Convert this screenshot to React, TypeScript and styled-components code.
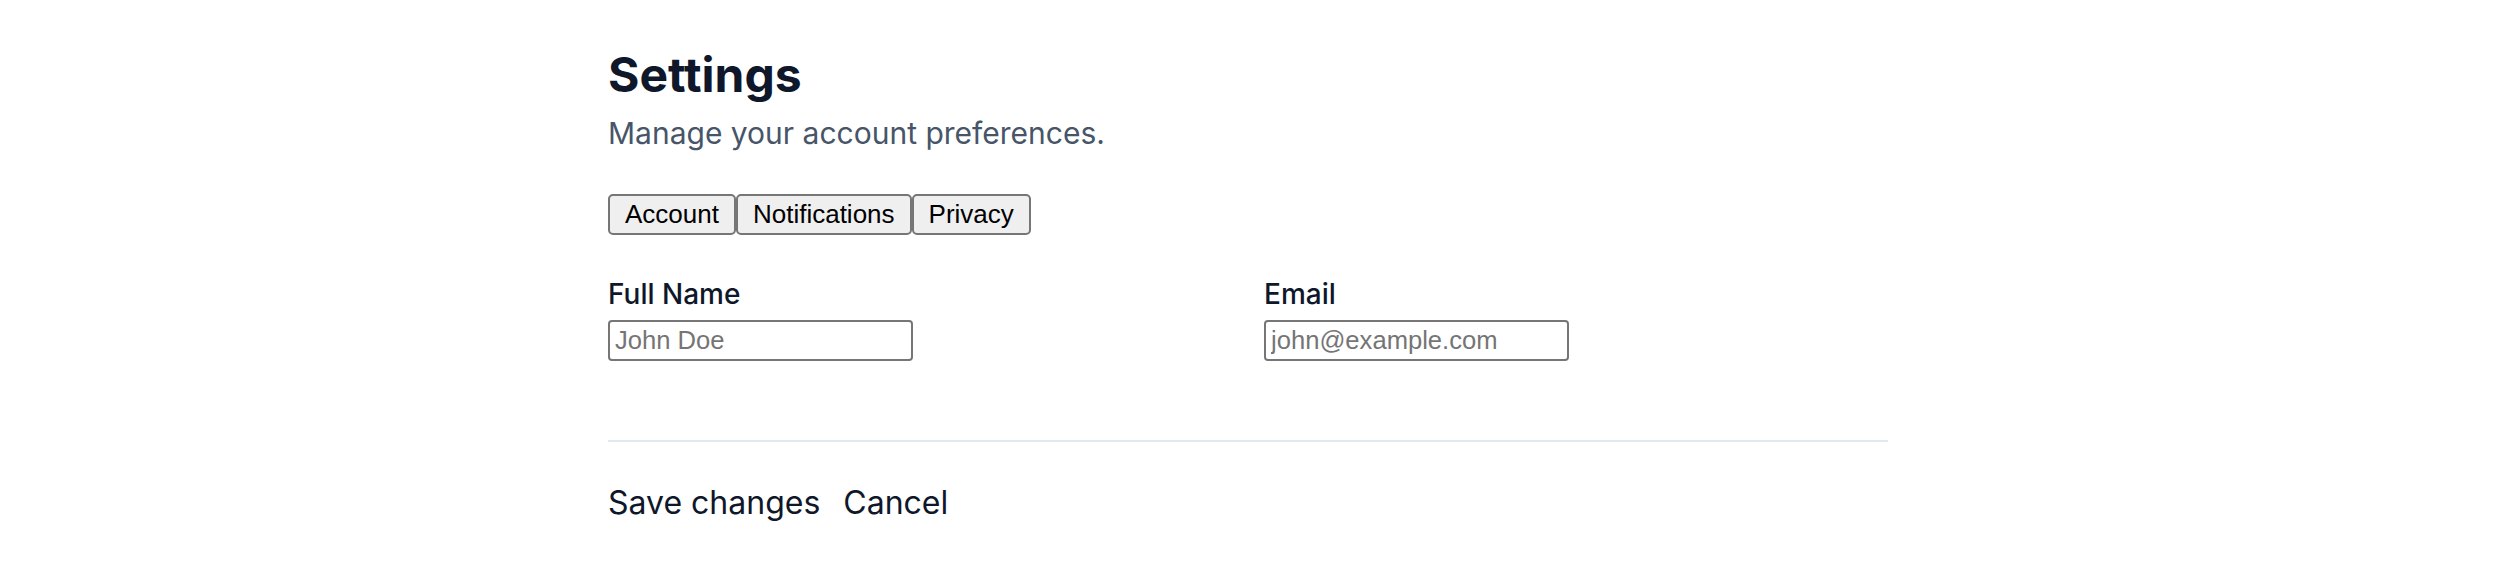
import * as React from 'react';
import styled, { createGlobalStyle } from 'styled-components';

const GlobalStyle = createGlobalStyle`
  html, body {
    margin: 0;
    padding: 0;
    background: #ffffff;
  }
  body {
    font-family: Inter, 'Noto Sans', sans-serif;
  }
`;

const Page = styled.div`
  max-width: 1280px;
  margin: 0 auto;
  padding-top: 45px;
`;

const Title = styled.h1`
  margin: 0 0 11px;
  font-family: Inter, sans-serif;
  font-size: 48px;
  font-weight: 700;
  line-height: normal;
  color: #0f172a;
`;

const Subtitle = styled.p`
  margin: 0 0 43px;
  font-family: Inter, sans-serif;
  font-size: 30px;
  font-weight: 400;
  line-height: normal;
  color: #475569;
`;

const Tabs = styled.div`
  display: flex;
`;

const Tab = styled.button`
  box-sizing: border-box;
  height: 41px;
  padding: 0 15px;
  font-family: 'Liberation Sans', Arial, sans-serif;
  font-size: 26px;
  color: #000000;
  background: #efefef;
  border: 2px solid #767676;
  border-radius: 5px;
  cursor: pointer;
`;

const FieldGrid = styled.div`
  display: grid;
  grid-template-columns: 1fr 1fr;
  gap: 32px;
  margin-top: 42px;
`;

const Field = styled.div`
  display: flex;
  flex-direction: column;
  align-items: flex-start;
`;

const Label = styled.label`
  display: block;
  margin-bottom: 9px;
  font-family: Inter, sans-serif;
  font-size: 28px;
  font-weight: 500;
  line-height: normal;
  color: #0f172a;
`;

const Input = styled.input`
  box-sizing: border-box;
  width: 305px;
  height: 41px;
  padding: 0 5px;
  font-family: 'Liberation Sans', Arial, sans-serif;
  font-size: 25.6px;
  color: #000000;
  background: #ffffff;
  border: 2px solid #767676;
  border-radius: 4px;
  &::placeholder {
    color: #757575;
  }
`;

const Footer = styled.div`
  display: flex;
  gap: 23px;
  margin-top: 79px;
  padding-top: 41px;
  border-top: 2px solid #e2e8f0;
`;

const TextButton = styled.button`
  padding: 0;
  font-family: Inter, sans-serif;
  font-size: 32px;
  font-weight: 400;
  line-height: normal;
  color: #0f172a;
  background: none;
  border: none;
  cursor: pointer;
`;

const tabs = ['Account', 'Notifications', 'Privacy'];

const App: React.FC = () => {
  return (
    <>
      <GlobalStyle />
      <Page>
        <Title>Settings</Title>
        <Subtitle>Manage your account preferences.</Subtitle>
        <Tabs>
          {tabs.map((t) => (
            <Tab key={t}>{t}</Tab>
          ))}
        </Tabs>
        <FieldGrid>
          <Field>
            <Label htmlFor="fullName">Full Name</Label>
            <Input id="fullName" type="text" placeholder="John Doe" />
          </Field>
          <Field>
            <Label htmlFor="email">Email</Label>
            <Input id="email" type="email" placeholder="john@example.com" />
          </Field>
        </FieldGrid>
        <Footer>
          <TextButton>Save changes</TextButton>
          <TextButton>Cancel</TextButton>
        </Footer>
      </Page>
    </>
  );
};

export default App;
